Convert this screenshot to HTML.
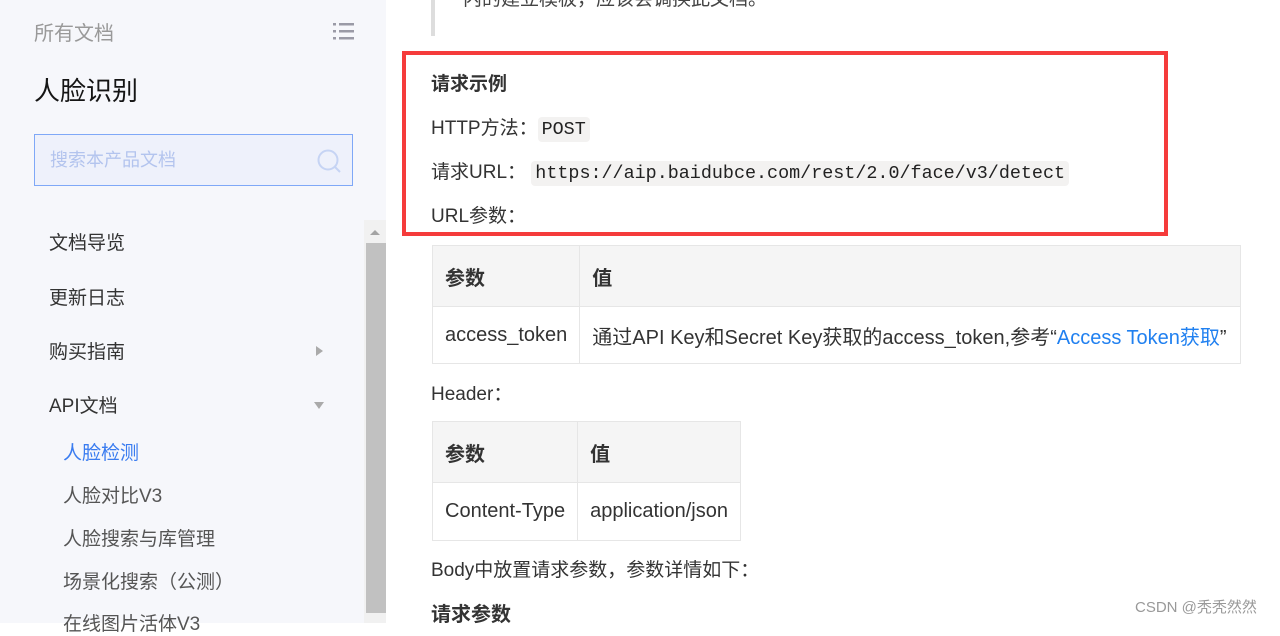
<!DOCTYPE html>
<html><head><meta charset="utf-8"><style>
*{margin:0;padding:0;box-sizing:border-box}
body{width:1280px;height:623px;overflow:hidden;background:#fff;font-family:"Liberation Sans","Noto Sans CJK SC",sans-serif;position:relative;color:#333}
.a{position:absolute;white-space:nowrap}
#side{position:absolute;left:0;top:0;width:386px;height:623px;background:#f6f7fb}
.nav{font-size:19px;color:#333}
.sub{font-size:19px;color:#555}
code{font-family:"Liberation Mono",monospace;background:#f3f2f1;border-radius:4px;padding:2px 4px;font-size:18.4px;color:#222}
table{position:absolute;border-collapse:collapse;font-size:20px}
td{border:1px solid #e6e6e6;padding:0 12px;color:#333;white-space:nowrap}
tr.h td{background:#f5f5f5;font-weight:bold}
</style></head><body>
<div id="side">
<div class="a" style="left:34px;top:17px;font-size:20px;color:#999">所有文档</div>
<svg class="a" style="left:333px;top:22px" width="21" height="18"><g fill="#9a9aa6"><rect x="0" y="1" width="3" height="2.5"/><rect x="6" y="1" width="15" height="2.5"/><rect x="0" y="8" width="3" height="2.5"/><rect x="6" y="8" width="15" height="2.5"/><rect x="0" y="15" width="3" height="2.5"/><rect x="6" y="15" width="15" height="2.5"/></g></svg>
<div class="a" style="left:34px;top:71px;font-size:26px;color:#151515">人脸识别</div>
<div class="a" style="left:34px;top:134px;width:319px;height:52px;border:1px solid #7fa8f7;background:#eef1fb"></div>
<div class="a" style="left:50px;top:146px;font-size:18px;color:#b3c4ee">搜索本产品文档</div>
<svg class="a" style="left:316px;top:148px" width="26" height="26"><circle cx="12" cy="12" r="9.5" fill="none" stroke="#c6d4f4" stroke-width="2"/><line x1="19" y1="19" x2="24" y2="24" stroke="#c6d4f4" stroke-width="2"/></svg>
<div class="a nav" style="left:49px;top:228px">文档导览</div>
<div class="a nav" style="left:49px;top:283px">更新日志</div>
<div class="a nav" style="left:49px;top:337px">购买指南</div>
<div class="a" style="left:316px;top:346px;width:0;height:0;border-left:7px solid #aaa;border-top:5px solid transparent;border-bottom:5px solid transparent"></div>
<div class="a nav" style="left:49px;top:391px">API文档</div>
<div class="a" style="left:314px;top:402px;width:0;height:0;border-top:7px solid #aaa;border-left:5px solid transparent;border-right:5px solid transparent"></div>
<div class="a sub" style="left:63px;top:438px;color:#3a7cf0">人脸检测</div>
<div class="a sub" style="left:63px;top:481px">人脸对比V3</div>
<div class="a sub" style="left:63px;top:524px">人脸搜索与库管理</div>
<div class="a sub" style="left:63px;top:567px">场景化搜索（公测）</div>
<div class="a sub" style="left:63px;top:609px">在线图片活体V3</div>
<div class="a" style="left:364px;top:220px;width:22px;height:403px;background:#f1f1f1"></div>
<div class="a" style="left:370px;top:230px;width:0;height:0;border-bottom:5px solid #a3a3a3;border-left:5px solid transparent;border-right:5px solid transparent"></div>
<div class="a" style="left:366px;top:243px;width:20px;height:370px;background:#c1c1c1"></div>
</div>
<div class="a" style="left:431px;top:0;width:4px;height:36px;background:#ddd"></div>
<div class="a" style="left:463px;top:-16px;font-size:19px;color:#444">内的建立模板，应该会调换此文档。</div>
<div class="a" style="left:402px;top:51px;width:766px;height:185px;border:4px solid #f53b3b"></div>
<div class="a" style="left:431px;top:69px;font-size:19px;font-weight:bold;color:#333">请求示例</div>
<div class="a" style="left:431px;top:113px;font-size:19px">HTTP方法：<code>POST</code></div>
<div class="a" style="left:431px;top:157px;font-size:19px">请求URL： <code>https://aip.baidubce.com/rest/2.0/face/v3/detect</code></div>
<div class="a" style="left:431px;top:201px;font-size:19px">URL参数：</div>
<table style="left:432px;top:245px;width:809px"><tr class="h" style="height:61px"><td style="width:146px">参数</td><td>值</td></tr>
<tr style="height:57px"><td>access_token</td><td>通过API Key和Secret Key获取的access_token,参考“<span style="color:#2080f0">Access Token获取</span>”</td></tr></table>
<div class="a" style="left:431px;top:379px;font-size:19px">Header：</div>
<table style="left:432px;top:421px;width:308px"><tr class="h" style="height:61px"><td style="width:145px">参数</td><td>值</td></tr>
<tr style="height:58px"><td>Content-Type</td><td>application/json</td></tr></table>
<div class="a" style="left:431px;top:555px;font-size:19px">Body中放置请求参数，参数详情如下：</div>
<div class="a" style="left:431px;top:598px;font-size:20px;font-weight:bold">请求参数</div>
<div class="a" style="left:1135px;top:596px;font-size:15px;color:#999">CSDN @秃秃然然</div>
</body></html>
